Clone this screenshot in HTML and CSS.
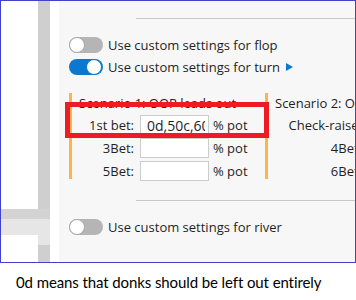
FILE: index.html
```html
<!DOCTYPE html>
<html lang="en">
<head>
    <meta charset="UTF-8">
    <meta name="viewport" content="width=device-width, initial-scale=1.0">
    <title>Custom street settings</title>
    <link rel="stylesheet" href="styles.css">
</head>
<body>
    <div class="frame">
        <div class="tree">
            <div class="tree-strip"></div>
            <div class="tree-band"></div>
            <div class="tree-band light"></div>
            <div class="tree-gap"></div>
            <div class="tree-stub"></div>
            <div class="tree-gap"></div>
            <div class="tree-strip"></div>
        </div>
        <div class="panel">
            <div class="rule"></div>

            <div class="option first">
                <span class="toggle"></span>
                <span>Use custom settings for flop</span>
            </div>
            <div class="option">
                <span class="toggle on"></span>
                <span>Use custom settings for turn</span>
                <span class="arrow"></span>
            </div>

            <div class="scenarios">
                <div class="scenario">
                    <div class="scenario-title">Scenario 1: OOP leads out</div>
                    <div class="bet-row">
                        <label class="bet-label">1st bet:</label>
                        <input class="bet-input" type="text" value="0d,50c,60p"/>
                        <span>% pot</span>
                    </div>
                    <div class="bet-row">
                        <label class="bet-label">3Bet:</label>
                        <input class="bet-input" type="text"/>
                        <span>% pot</span>
                    </div>
                    <div class="bet-row">
                        <label class="bet-label">5Bet:</label>
                        <input class="bet-input" type="text"/>
                        <span>% pot</span>
                    </div>
                </div>
                <div class="scenario second">
                    <div class="scenario-title">Scenario 2: OOP checks, IP bets</div>
                    <div class="bet-row">
                        <label class="bet-label">Check-raise:</label>
                        <input class="bet-input" type="text"/>
                    </div>
                    <div class="bet-row">
                        <label class="bet-label">4Bet:</label>
                        <input class="bet-input" type="text"/>
                    </div>
                    <div class="bet-row">
                        <label class="bet-label">6Bet:</label>
                        <input class="bet-input" type="text"/>
                    </div>
                </div>
            </div>

            <div class="rule lower"></div>

            <div class="option river">
                <span class="toggle"></span>
                <span>Use custom settings for river</span>
            </div>

            <div class="highlight"></div>
        </div>
    </div>
    <p class="caption">0d means that donks should be left out entirely</p>
</body>
</html>
```

FILE: styles.css
```css
body {
    background-color: #FFFFFF;
    color: #000000;
    font-family: 'Open Sans', 'Noto Sans', sans-serif;
    margin: 0;
    padding: 0;
}

.frame {
    border: 1px solid #4343C9;
    box-sizing: border-box;
    display: flex;
    height: 263px;
    overflow: hidden;
    width: 356px;
}

/* left tree pane */
.tree {
    background-color: #FFFFFF;
    display: grid;
    flex: none;
    grid-template-columns: 37px 12px;
    grid-template-rows: 208px 10px 16px 10px 1fr;
    width: 58px;
}
.tree-strip {
    background-color: #CFCFCF;
    grid-column: 2;
}
.tree-band {
    background-color: #D3D3D3;
    grid-column: 1 / 3;
}
.tree-band.light {
    background-color: #E6E6E6;
}
.tree-gap {
    grid-column: 1;
}
.tree-stub {
    background-color: #E6E6E6;
    grid-column: 2;
}

/* settings panel */
.panel {
    background-color: #F7F7F7;
    color: #1F1F1F;
    flex: 1;
    font-size: 13px;
    min-width: 0;
    position: relative;
}
.rule {
    border-top: 1px solid #C8C8C8;
    margin-left: 77px;
    margin-top: 17px;
}
.rule.lower {
    margin-top: 21px;
}

.option {
    align-items: center;
    display: flex;
    gap: 5px;
    height: 22px;
    padding-left: 10px;
    white-space: nowrap;
}
.option.first {
    margin-top: 15px;
}
.option.river {
    margin-top: 15px;
}

.toggle {
    background-color: #B5B5B5;
    border-radius: 8px;
    box-sizing: border-box;
    display: flex;
    flex: none;
    height: 16px;
    justify-content: flex-start;
    width: 34px;
}
.toggle::after {
    background-color: #FFFFFF;
    border: 1px solid #A8A8A8;
    border-radius: 50%;
    box-sizing: border-box;
    content: "";
    height: 16px;
    width: 16px;
}
.toggle.on {
    background-color: #0A78D1;
    justify-content: flex-end;
    padding-right: 1px;
}
.toggle.on::after {
    border-color: #0A78D1;
}

.arrow {
    border-bottom: 4px solid transparent;
    border-left: 7px solid #0A78D1;
    border-top: 4px solid transparent;
    height: 0;
    margin-left: 1px;
    width: 0;
}

.scenarios {
    display: flex;
    margin-left: 10px;
    margin-top: 15px;
}
.scenario {
    border-left: 3px solid #FDB44B;
    flex: none;
    height: 86px;
    width: 193px;
}
.scenario.second {
    width: 200px;
}
.scenario-title {
    line-height: 20px;
    padding-left: 7px;
    white-space: nowrap;
}
.bet-row {
    align-items: center;
    display: flex;
    height: 22px;
    margin-top: 1px;
    white-space: nowrap;
}
.bet-label {
    flex: none;
    margin-right: 6px;
    text-align: right;
    width: 62px;
}
.second .bet-label {
    width: 94px;
}
.bet-input {
    background-color: #FFFFFF;
    border: 1px solid #CCCCCC;
    box-sizing: border-box;
    color: #1F1F1F;
    flex: none;
    font-family: inherit;
    font-size: 14px;
    height: 20px;
    margin-right: 4px;
    padding: 0 3px 0 6px;
    width: 69px;
}

.highlight {
    border: 5px solid #ED1C24;
    box-sizing: border-box;
    height: 36px;
    left: 6px;
    position: absolute;
    top: 101px;
    width: 204px;
}

.caption {
    font-family: 'Lato', sans-serif;
    font-size: 15px;
    letter-spacing: -0.1px;
    line-height: 20px;
    margin: 9px 0 0 16px;
}
```
